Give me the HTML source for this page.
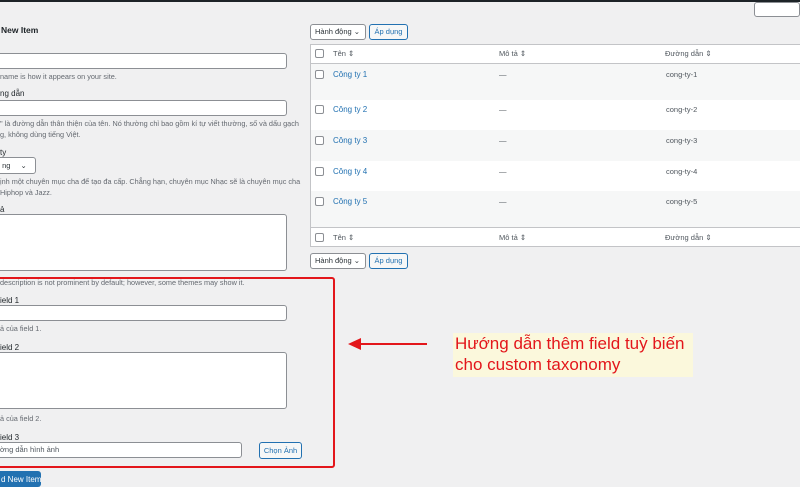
<!DOCTYPE html><html><head><meta charset="utf-8"><style>
*{box-sizing:border-box;margin:0;padding:0}
body{width:800px;height:485px;overflow:hidden;background:#f0f0f1;font-family:"Liberation Sans","Noto Sans CJK SC",sans-serif;font-size:8px;color:#3c434a;position:relative}
.a{position:absolute}
.in{position:absolute;background:#fff;border:1px solid #8c8f94;border-radius:3px}
.d{position:absolute;font-size:7.3px;color:#646970;white-space:nowrap}
.l{position:absolute;font-size:8px;color:#1d2327;white-space:nowrap}
.cb{position:absolute;width:9px;height:9px;border:1px solid #8c8f94;border-radius:2px;background:#fff}
.btn{position:absolute;border:1px solid #2271b1;color:#2271b1;background:#f6f7f7;border-radius:3px;font-size:7.5px;text-align:center;white-space:nowrap}
.sel{position:absolute;border:1px solid #8c8f94;background:#fff;border-radius:3px;font-size:7.5px;padding-left:4px;color:#2c3338;white-space:nowrap}
.lnk{color:#2271b1;font-size:8px;white-space:nowrap}
.g{color:#50575e;font-size:7.5px;white-space:nowrap}
</style></head><body>
<div class="a" style="left:0;top:0;width:800px;height:2px;background:#1d2327"></div>
<div class="a" style="left:754px;top:2px;width:46px;height:15px;background:#fff;border:1px solid #8c8f94;border-radius:3px"></div>
<div class="l" style="left:1px;top:25px;font-weight:bold;font-size:8.5px">New Item</div>
<div class="in" style="left:-5px;top:53px;width:292px;height:16px"></div>
<div class="d" style="left:0;top:72px">name is how it appears on your site.</div>
<div class="l" style="left:0;top:89px">ng dẫn</div>
<div class="in" style="left:-5px;top:100px;width:292px;height:16px"></div>
<div class="d" style="left:0;top:119px">" là đường dẫn thân thiện của tên. Nó thường chỉ bao gồm kí tự viết thường, số và dấu gạch</div>
<div class="d" style="left:0;top:130px">g, không dùng tiếng Việt.</div>
<div class="l" style="left:0;top:148px">ty</div>
<div class="sel" style="left:-5px;top:157px;width:41px;height:17px;line-height:15px">&nbsp;ng <span style="margin-left:8px">⌄</span></div>
<div class="d" style="left:0;top:177px">ịnh một chuyên mục cha để tạo đa cấp. Chẳng hạn, chuyên mục Nhạc sẽ là chuyên mục cha</div>
<div class="d" style="left:0;top:188px">Hiphop và Jazz.</div>
<div class="l" style="left:0;top:205px">ả</div>
<div class="in" style="left:-5px;top:214px;width:292px;height:57px"></div>
<div class="d" style="left:0;top:278px">description is not prominent by default; however, some themes may show it.</div>
<div class="l" style="left:0;top:296px">ield 1</div>
<div class="in" style="left:-5px;top:305px;width:292px;height:16px"></div>
<div class="d" style="left:0;top:324px">ả của field 1.</div>
<div class="l" style="left:0;top:343px">ield 2</div>
<div class="in" style="left:-5px;top:352px;width:292px;height:57px"></div>
<div class="d" style="left:0;top:414px">ả của field 2.</div>
<div class="l" style="left:0;top:433px">ield 3</div>
<div class="in" style="left:-5px;top:442px;width:247px;height:16px;font-size:7.5px;padding-left:4px;line-height:14px;color:#50575e">ờng dẫn hình ảnh</div>
<div class="btn" style="left:259px;top:442px;width:43px;height:17px;line-height:15px">Chọn Ảnh</div>
<div class="a" style="left:-5px;top:277px;width:340px;height:191px;border:2px solid #e3161b;border-radius:3px"></div>
<div class="a" style="left:-3px;top:471px;width:44px;height:16px;background:#2271b1;color:#fff;font-size:8px;padding:4px 0 0 4px;border-radius:3px;white-space:nowrap;overflow:hidden">d New Item</div>

<div class="sel" style="left:310px;top:24px;width:56px;height:16px;line-height:14px">Hành động <span>⌄</span></div>
<div class="btn" style="left:369px;top:24px;width:39px;height:16px;line-height:14px">Áp dụng</div>
<div class="a" style="left:310px;top:44px;width:490px;height:203px;background:#fff;border:1px solid #c3c4c7;border-right:none"></div>
<div class="a" style="left:311px;top:63px;width:489px;height:1px;background:#c3c4c7"></div>
<div class="a" style="left:311px;top:64px;width:489px;height:36px;background:#f6f7f7"></div>
<div class="a" style="left:311px;top:130px;width:489px;height:31px;background:#f6f7f7"></div>
<div class="a" style="left:311px;top:191px;width:489px;height:36px;background:#f6f7f7"></div>
<div class="a" style="left:311px;top:227px;width:489px;height:1px;background:#c3c4c7"></div>
<div class="cb" style="left:315px;top:49px"></div>
<div class="a g" style="left:333px;top:49px">Tên ⇕</div>
<div class="a g" style="left:499px;top:49px">Mô tả ⇕</div>
<div class="a g" style="left:665px;top:49px">Đường dẫn ⇕</div>
<div class="cb" style="left:315px;top:70px"></div><div class="a lnk" style="left:333px;top:70px">Công ty 1</div><div class="a g" style="left:499px;top:70px">—</div><div class="a g" style="left:666px;top:70px">cong-ty-1</div>
<div class="cb" style="left:315px;top:105px"></div><div class="a lnk" style="left:333px;top:105px">Công ty 2</div><div class="a g" style="left:499px;top:105px">—</div><div class="a g" style="left:666px;top:105px">cong-ty-2</div>
<div class="cb" style="left:315px;top:136px"></div><div class="a lnk" style="left:333px;top:136px">Công ty 3</div><div class="a g" style="left:499px;top:136px">—</div><div class="a g" style="left:666px;top:136px">cong-ty-3</div>
<div class="cb" style="left:315px;top:167px"></div><div class="a lnk" style="left:333px;top:167px">Công ty 4</div><div class="a g" style="left:499px;top:167px">—</div><div class="a g" style="left:666px;top:167px">cong-ty-4</div>
<div class="cb" style="left:315px;top:197px"></div><div class="a lnk" style="left:333px;top:197px">Công ty 5</div><div class="a g" style="left:499px;top:197px">—</div><div class="a g" style="left:666px;top:197px">cong-ty-5</div>
<div class="cb" style="left:315px;top:233px"></div>
<div class="a g" style="left:333px;top:233px">Tên ⇕</div>
<div class="a g" style="left:499px;top:233px">Mô tả ⇕</div>
<div class="a g" style="left:665px;top:233px">Đường dẫn ⇕</div>
<div class="sel" style="left:310px;top:253px;width:56px;height:16px;line-height:14px">Hành động <span>⌄</span></div>
<div class="btn" style="left:369px;top:253px;width:39px;height:16px;line-height:14px">Áp dụng</div>

<svg class="a" style="left:345px;top:335px" width="90" height="18"><line x1="10" y1="9" x2="82" y2="9" stroke="#e3161b" stroke-width="2"/><polygon points="3,9 16,3 16,15" fill="#e3161b"/></svg>
<div class="a" style="left:453px;top:333px;width:240px;height:44px;background:#fbf8dc;color:#e3161b;font-size:17px;line-height:21px;padding-left:2px;white-space:nowrap">Hướng dẫn thêm field tuỳ biến<br>cho custom taxonomy</div>
</body></html>
